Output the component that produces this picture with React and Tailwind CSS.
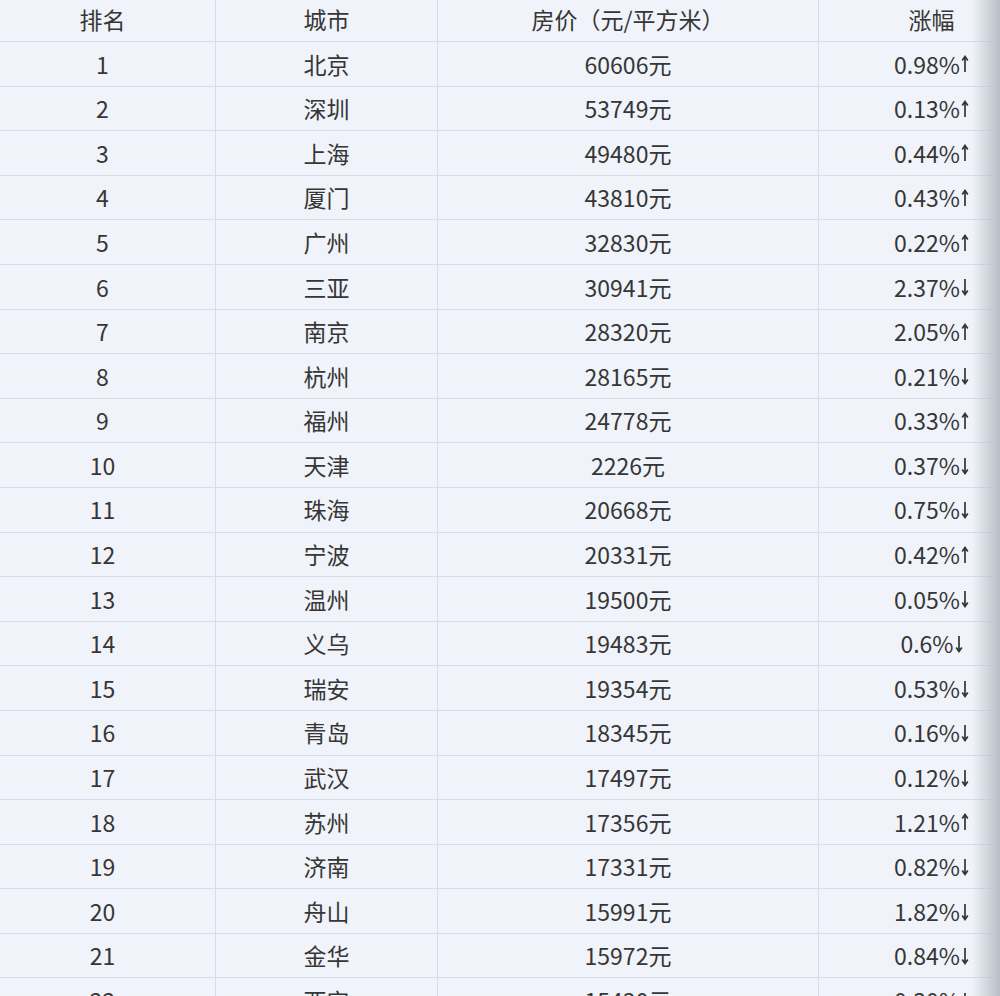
import React from 'react';

const rows = [
  ['1', '北京', '60606元', '0.98%', 'up'],
  ['2', '深圳', '53749元', '0.13%', 'up'],
  ['3', '上海', '49480元', '0.44%', 'up'],
  ['4', '厦门', '43810元', '0.43%', 'up'],
  ['5', '广州', '32830元', '0.22%', 'up'],
  ['6', '三亚', '30941元', '2.37%', 'down'],
  ['7', '南京', '28320元', '2.05%', 'up'],
  ['8', '杭州', '28165元', '0.21%', 'down'],
  ['9', '福州', '24778元', '0.33%', 'up'],
  ['10', '天津', '2226元', '0.37%', 'down'],
  ['11', '珠海', '20668元', '0.75%', 'down'],
  ['12', '宁波', '20331元', '0.42%', 'up'],
  ['13', '温州', '19500元', '0.05%', 'down'],
  ['14', '义乌', '19483元', '0.6%', 'down'],
  ['15', '瑞安', '19354元', '0.53%', 'down'],
  ['16', '青岛', '18345元', '0.16%', 'down'],
  ['17', '武汉', '17497元', '0.12%', 'down'],
  ['18', '苏州', '17356元', '1.21%', 'up'],
  ['19', '济南', '17331元', '0.82%', 'down'],
  ['20', '舟山', '15991元', '1.82%', 'down'],
  ['21', '金华', '15972元', '0.84%', 'down'],
  ['22', '西安', '15430元', '0.30%', 'down'],
];

const font = { fontFamily: '"Noto Sans CJK SC", "Noto Sans", sans-serif' };

// thin arrow like the one in the screenshot
function Arrow({ dir }) {
  return (
    <svg width="8" height="18" viewBox="0 0 8 18" className="ml-[1px] mt-[1px]">
      {dir === 'up' ? (
        <path d="M4 17V2M1.2 5.5L4 1.5l2.8 4" fill="none" stroke="#2e3833" strokeWidth="1.7" />
      ) : (
        <path d="M4 1v15M1.2 12.5L4 16.5l2.8-4" fill="none" stroke="#2e3833" strokeWidth="1.7" />
      )}
    </svg>
  );
}

function Cell({ children, className = '' }) {
  return (
    <div className={`flex items-center justify-center border-r border-[#d7dce8] ${className}`}>
      {children}
    </div>
  );
}

function Row({ r, header }) {
  return (
    <div className={`grid grid-cols-[216px_222px_381px_225px] border-b border-[#d7dce8] ${header ? 'h-[44px]' : 'h-[44.6px]'}`}>
      <Cell className="pr-[10px]">{r[0]}</Cell>
      <Cell>{r[1]}</Cell>
      <Cell>{r[2]}</Cell>
      <Cell className="border-r-0">
        {r[3]}
        {r[4] && <Arrow dir={r[4]} />}
      </Cell>
    </div>
  );
}

export default function App() {
  return (
    <div className="relative h-[996px] w-[1000px] overflow-hidden bg-[#f0f3f9] text-[23px] text-[#363636]" style={font}>
      <div className="w-[1044px] -mt-[2px]">
        <Row r={['排名', '城市', '房价（元/平方米）', '涨幅', '']} header />
        {rows.map((r) => (
          <Row key={r[0]} r={r} />
        ))}
      </div>
      {/* shadow at the right edge */}
      <div className="pointer-events-none absolute right-0 top-0 h-full w-[28px] bg-gradient-to-r from-transparent to-[#b9bec6]" />
    </div>
  );
}
